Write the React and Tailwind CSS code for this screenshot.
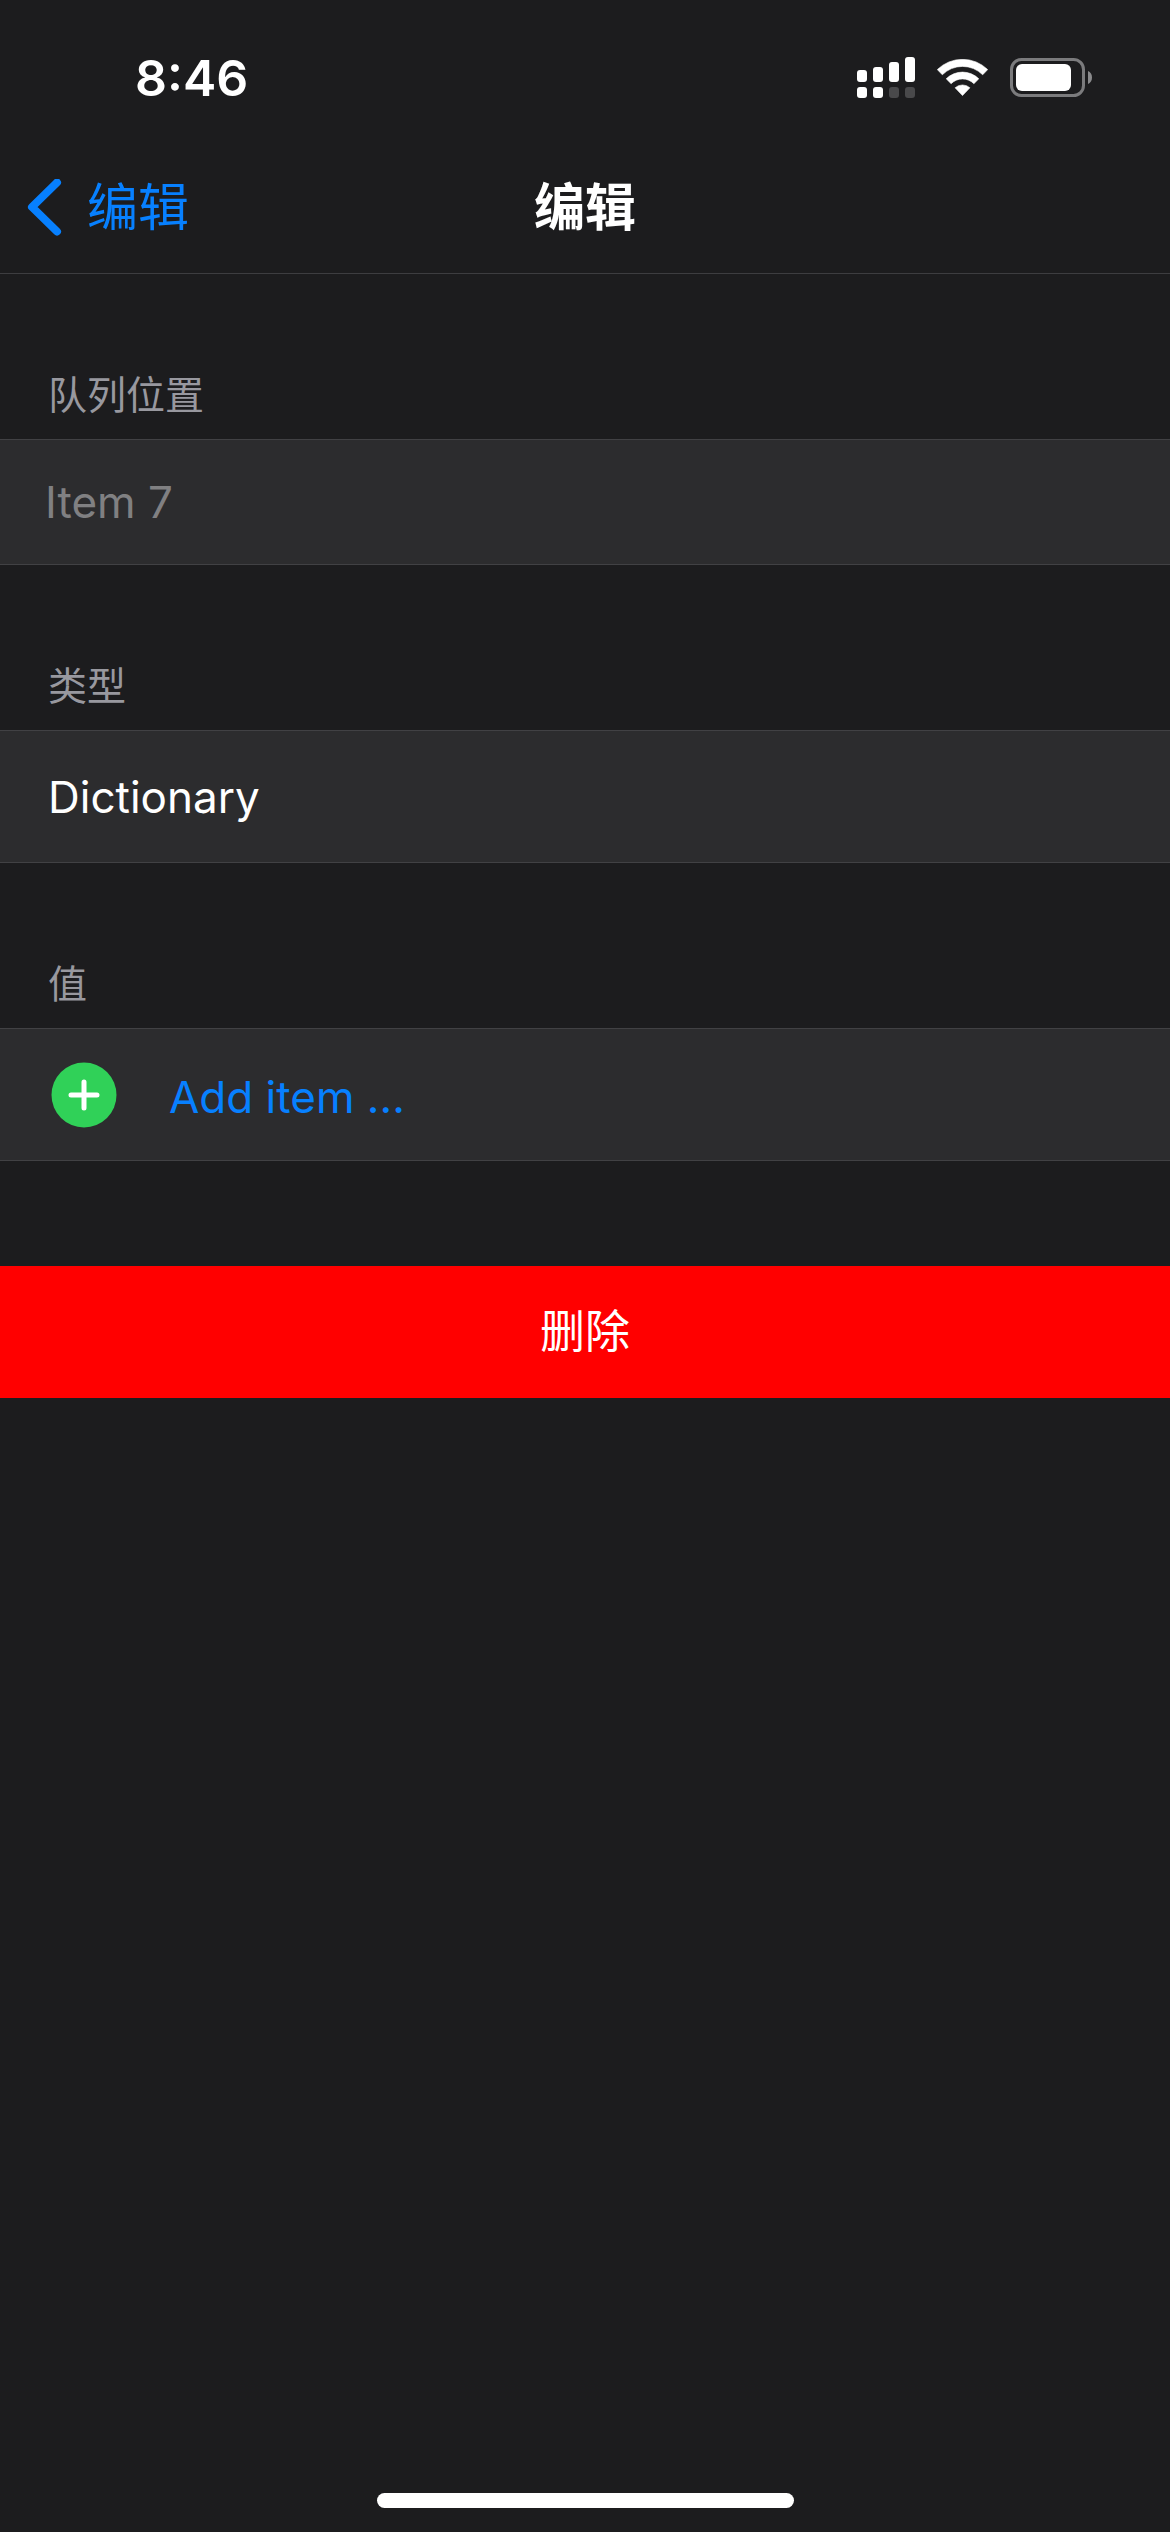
function SignalIcon() {
  return (
    <svg width="58" height="42" viewBox="0 0 58 42" fill="#fff" aria-hidden="true">
      <rect x="0" y="13" width="10" height="12" rx="3" />
      <rect x="16" y="10" width="10" height="15" rx="3" />
      <rect x="32" y="5" width="10" height="20" rx="3" />
      <rect x="48" y="0" width="10" height="25" rx="3" />
      <rect x="0" y="30" width="10" height="11" rx="3" />
      <rect x="16" y="30" width="10" height="11" rx="3" />
      <rect x="32" y="30" width="10" height="11" rx="3" fill="#49494b" />
      <rect x="48" y="30" width="10" height="11" rx="3" fill="#49494b" />
    </svg>
  );
}

function WifiIcon() {
  return (
    <svg width="51" height="38" viewBox="0 0 51 38" fill="#fff" stroke="#fff" strokeWidth="0.6" strokeLinejoin="round" aria-hidden="true">
      <path d="M0.3 10.6A36 36 0 0 1 50.7 10.6L45.7 15.8A28.5 28.5 0 0 0 5.3 15.8Z" />
      <path d="M9.2 19.8A23.2 23.2 0 0 1 41.8 19.8L36.9 24.7A16 16 0 0 0 14.1 24.7Z" />
      <path d="M18.1 28.8A11 11 0 0 1 32.9 28.8L25.5 36.6Z" />
    </svg>
  );
}

function BatteryIcon() {
  return (
    <svg width="83" height="40" viewBox="0 0 83 40" aria-hidden="true">
      <rect x="1.5" y="1.5" width="72" height="36" rx="10" fill="none" stroke="#7b7b7d" strokeWidth="3" />
      <rect x="6" y="6" width="55" height="27" rx="6" fill="#fff" />
      <path d="M78 13C80.5 14 82 16.5 82 19.5C82 22.5 80.5 25 78 26Z" fill="#8a8a8c" />
    </svg>
  );
}

function StatusBar() {
  return (
    <div className="flex h-[155px] items-center justify-between pr-[77px] pl-[135px]">
      <time className="text-[50px] leading-[54px] font-semibold">8:46</time>
      <div className="flex items-center gap-[22px]">
        <SignalIcon />
        <WifiIcon />
        <BatteryIcon />
      </div>
    </div>
  );
}

function NavBar() {
  return (
    <nav className="grid h-[119px] grid-cols-[1fr_auto_1fr] items-center border-b border-[#3d3d40] px-[27px] pb-[12px]">
      <button type="button" className="flex items-center gap-[24px] justify-self-start text-[51px] leading-[60px] text-[#0780ff]">
        <svg width="36" height="58" viewBox="0 0 36 58" fill="none" stroke="currentColor" strokeWidth="8" strokeLinecap="round" strokeLinejoin="round" aria-hidden="true">
          <path d="M30 3.5L5 28L30 52.5" />
        </svg>
        编辑
      </button>
      <h1 className="text-[51px] leading-[60px] font-bold">编辑</h1>
    </nav>
  );
}

const labelClass = "flex h-[165px] items-end px-12 pb-[20px] text-[39px] leading-[48px] text-[#98989f]";
const rowClass = "flex w-full items-center border-y border-[#414144] bg-[#2c2c2e] text-left text-[44px] leading-[54px]";

export default function App() {
  return (
    <div className="flex min-h-screen flex-col bg-[#1c1c1e] font-[Inter,'Noto_Sans_CJK_SC',sans-serif] text-white">
      <StatusBar />
      <NavBar />
      <main className="flex-1">
        <label htmlFor="position" className={labelClass}>队列位置</label>
        <input
          id="position"
          type="text"
          placeholder="Item 7"
          className={`${rowClass} h-[126px] px-[45px] outline-none placeholder:text-[#808082]`}
        />
        <h2 id="type-label" className={labelClass}>类型</h2>
        <button type="button" aria-describedby="type-label" className={`${rowClass} h-[133px] px-12`}>
          Dictionary
        </button>
        <h2 id="value-label" className={labelClass}>值</h2>
        <button type="button" aria-describedby="value-label" className={`${rowClass} h-[133px] gap-[49px] px-12 text-[#0780ff]`}>
          <svg width="72" height="66" viewBox="0 0 72 66" aria-hidden="true">
            <circle cx="36" cy="33" r="32.5" fill="#30d158" />
            <path d="M36 20V46M23 33H49" stroke="#fff" strokeWidth="5" strokeLinecap="round" />
          </svg>
          <span className="pt-1">Add item ...</span>
        </button>
        <button type="button" className="mt-[105px] h-[132px] w-full bg-[#ff0000] text-[45px] leading-[54px]">
          删除
        </button>
      </main>
      <div className="mx-auto mb-6 h-[15px] w-[417px] rounded-full bg-white" />
    </div>
  );
}
